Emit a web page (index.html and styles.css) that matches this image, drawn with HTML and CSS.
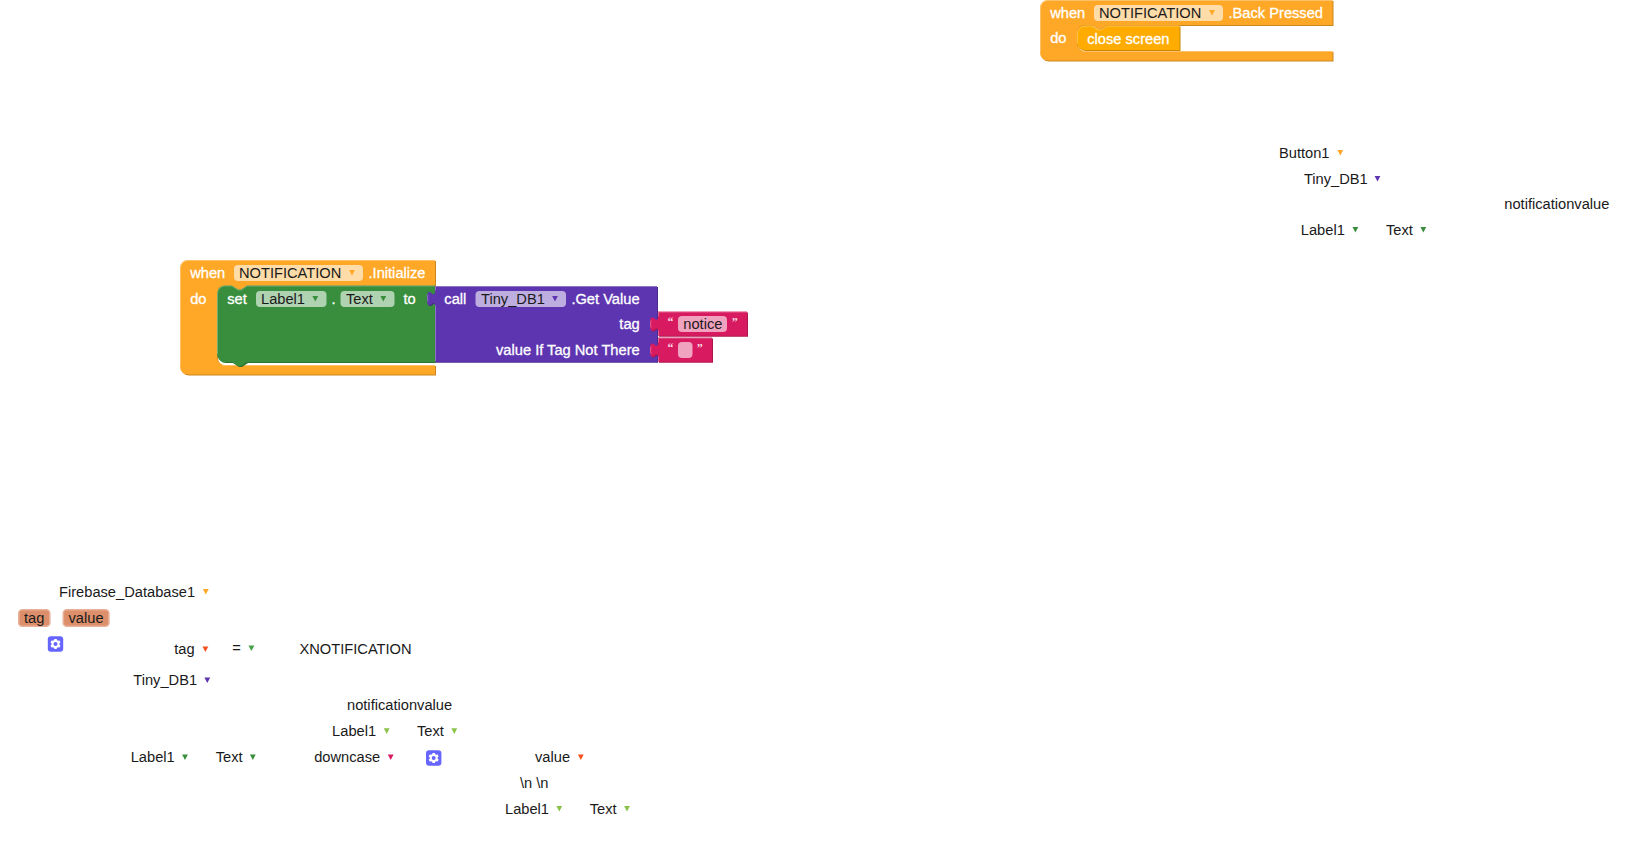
FILE: index.html
```
<!DOCTYPE html>
<html lang="en">

<head>
    <meta charset="UTF-8">
    <meta name="viewport" content="width=device-width, initial-scale=1.0">
    <title>Blocks</title>
    <link rel="stylesheet" href="styles.css">
</head>

<body>
    <svg class="workspace" width="1634" height="848">
        <defs>
            <path id="arrow" d="M -2.9,0 h 5.8 l -2.9,5.6 z" />
            <g id="gear">
                <rect class="gear-bg" width="15.4" height="15.4" rx="3" />
                <path class="gear-teeth" d="M 7.7,2.6 V 12.8 M 3.3,5.15 L 12.1,10.25 M 3.3,10.25 L 12.1,5.15" />
                <circle class="gear-ring" cx="7.7" cy="7.7" r="3" />
            </g>
            <path id="init" d="M 180.5,268.5 a 8,8 0 0 1 8,-8 H 435.5 V 286 H 247.5 l -6,4 h -3 l -6,-4 h -7 a 8,8 0 0 0 -8,8 V 357.5 a 8,8 0 0 0 8,8 H 435.5 V 375 H 188.5 a 8,8 0 0 1 -8,-8 z" />
            <path id="set" d="M 217.5,294 a 8,8 0 0 1 8,-8 h 7 l 6,4 h 3 l 6,-4 H 435.5 V 362.5 H 247.5 l -6,4 h -3 l -6,-4 h -7 a 8,8 0 0 1 -8,-8 z" />
            <path id="call" d="M 435.5,286.5 H 657.5 V 362.3 H 435.5 V 306.5 c 0,-10 -8,8 -8,-7.5 s 8,2.5 8,-7.5 z" />
            <path id="notice" d="M 658.5,312 H 747.5 V 336.3 H 658.5 V 332 c 0,-10 -8,8 -8,-7.5 s 8,2.5 8,-7.5 z" />
            <path id="empty" d="M 658.5,338 H 712.5 V 362.3 H 658.5 V 358 c 0,-10 -8,8 -8,-7.5 s 8,2.5 8,-7.5 z" />
            <path id="back" d="M 1040.5,8.5 a 8,8 0 0 1 8,-8 H 1333 V 25.5 H 1107.5 l -6,4 h -3 l -6,-4 h -7 a 8,8 0 0 0 -8,8 V 43.5 a 8,8 0 0 0 8,8 H 1333 V 61 H 1048.5 a 8,8 0 0 1 -8,-8 z" />
            <path id="close" d="M 1077.5,34 a 8,8 0 0 1 8,-8 h 7 l 6,4 h 3 l 6,-4 H 1180 V 50.5 H 1085.5 a 8,8 0 0 1 -8,-8 z" />
        </defs>

        <!-- when NOTIFICATION.Back Pressed -->
        <g class="block event">
            <use class="shade" href="#back" x="1" y="1" />
            <use class="shape" href="#back" />
            <path class="light" d="M 1041,53 V 8.5 a 7.5,7.5 0 0 1 7.5,-7.5 H 1333 M 1083,52 H 1333" />
            <text x="1050.2" y="17.7">when</text>
            <rect class="field" x="1094" y="5" width="129" height="16" rx="4" />
            <text class="value" x="1099" y="17.7">NOTIFICATION</text>
            <use class="arrow" href="#arrow" x="1212" y="10" />
            <text x="1228.5" y="17.7">.Back Pressed</text>
            <text x="1050.2" y="43">do</text>
        </g>
        <g class="block control">
            <use class="shade" href="#close" x="1" y="1" />
            <use class="shape" href="#close" />
            <path class="light" d="M 1078,44 V 34 a 7.5,7.5 0 0 1 7.5,-7.5 h 7 l 6,4 h 3 l 6,-4 H 1180" />
            <text x="1087.2" y="43.7">close screen</text>
        </g>

        <!-- when NOTIFICATION.Initialize -->
        <g class="block event">
            <use class="shade" href="#init" x="1" y="1" />
            <use class="shape" href="#init" />
            <path class="light" d="M 181,367 V 268.5 a 7.5,7.5 0 0 1 7.5,-7.5 H 435.5 M 223,366 H 435.5" />
            <text x="190.2" y="278">when</text>
            <rect class="field" x="234" y="265" width="129" height="16" rx="4" />
            <text class="value" x="239" y="278">NOTIFICATION</text>
            <use class="arrow" href="#arrow" x="352" y="270" />
            <text x="368.5" y="278">.Initialize</text>
            <text x="190.2" y="303.5">do</text>
        </g>
        <g class="block setter">
            <use class="shade" href="#set" x="1" y="1" />
            <use class="shape" href="#set" />
            <path class="light" d="M 218,354.5 V 294 a 7.5,7.5 0 0 1 7.5,-7.5 h 7 l 6,4 h 3 l 6,-4 H 435" />
            <text x="227.2" y="303.7">set</text>
            <rect class="field" x="256" y="291" width="70.5" height="16" rx="4" />
            <text class="value" x="261" y="303.7">Label1</text>
            <use class="arrow" href="#arrow" x="315.3" y="296" />
            <text x="331.5" y="303.7">.</text>
            <rect class="field" x="340.5" y="291" width="54" height="16" rx="4" />
            <text class="value" x="346" y="303.7">Text</text>
            <use class="arrow" href="#arrow" x="383.3" y="296" />
            <text x="403.5" y="303.7">to</text>
        </g>
        <g class="block database">
            <use class="shade" href="#call" x="1" y="1" />
            <use class="shape" href="#call" />
            <path class="light" d="M 436,362 V 306 M 428.5,302 q -1,-5 0,-7 M 436,291 V 287 H 657.5" />
            <text x="444.3" y="303.7">call</text>
            <rect class="field" x="475.5" y="291" width="90.5" height="16" rx="4" />
            <text class="value" x="481" y="303.7">Tiny_DB1</text>
            <use class="arrow" href="#arrow" x="555" y="296" />
            <text x="571.4" y="303.7">.Get Value</text>
            <text class="end" x="639.7" y="329">tag</text>
            <text class="end" x="639.7" y="354.7">value If Tag Not There</text>
        </g>
        <g class="block string">
            <use class="shade" href="#notice" x="1" y="1" />
            <use class="shape" href="#notice" />
            <path class="light" d="M 659,336 V 331 M 651.5,328 q -1,-5 0,-7 M 659,317 V 312.5 H 747.5" />
            <text class="quote" x="667.5" y="326">“</text>
            <rect class="field" x="678" y="316" width="49" height="16" rx="4" />
            <text class="value" x="683.3" y="329">notice</text>
            <text class="quote" x="731.7" y="326">”</text>
        </g>
        <g class="block string">
            <use class="shade" href="#empty" x="1" y="1" />
            <use class="shape" href="#empty" />
            <path class="light" d="M 659,362 V 357 M 651.5,354 q -1,-5 0,-7 M 659,343 V 338.5 H 712.5" />
            <text class="quote" x="667.5" y="352">“</text>
            <rect class="field" x="678" y="342" width="14.5" height="16" rx="4" />
            <text class="quote" x="696.7" y="352">”</text>
        </g>

        <!-- Button1 click -->
        <g class="loose">
            <text x="1279" y="158">Button1</text>
            <use class="orange" href="#arrow" x="1340.3" y="150" />
            <text x="1303.9" y="184">Tiny_DB1</text>
            <use class="purple" href="#arrow" x="1377.5" y="176" />
            <text x="1504.3" y="209">notificationvalue</text>
            <text x="1300.8" y="235">Label1</text>
            <use class="green" href="#arrow" x="1355.4" y="227" />
            <text x="1386" y="235">Text</text>
            <use class="green" href="#arrow" x="1423.3" y="227" />
        </g>

        <!-- Firebase_Database1 data changed -->
        <g class="loose">
            <text x="59" y="597">Firebase_Database1</text>
            <use class="orange" href="#arrow" x="205.8" y="589" />
            <rect class="param" x="18.8" y="609.8" width="31" height="16.4" rx="3.5" />
            <text x="24" y="622.5">tag</text>
            <rect class="param" x="63.3" y="609.8" width="45.6" height="16.4" rx="3.5" />
            <text x="68.5" y="622.5">value</text>
            <use href="#gear" x="47.8" y="636.3" />
            <text x="174.3" y="654">tag</text>
            <use class="red" href="#arrow" x="205.4" y="646.5" />
            <text x="232.2" y="653">=</text>
            <use class="mid-green" href="#arrow" x="251.4" y="645.5" />
            <text x="299.5" y="654">XNOTIFICATION</text>
            <text x="133.3" y="685">Tiny_DB1</text>
            <use class="purple" href="#arrow" x="207.3" y="677.5" />
            <text x="347" y="710">notificationvalue</text>
            <text x="332.1" y="736">Label1</text>
            <use class="lime" href="#arrow" x="386.7" y="728.3" />
            <text x="417" y="736">Text</text>
            <use class="lime" href="#arrow" x="454.3" y="728.3" />
            <text x="130.7" y="762">Label1</text>
            <use class="green" href="#arrow" x="185" y="754.5" />
            <text x="215.7" y="762">Text</text>
            <use class="green" href="#arrow" x="252.8" y="754.5" />
            <text x="314.2" y="762">downcase</text>
            <use class="pink" href="#arrow" x="390.7" y="754.5" />
            <use href="#gear" x="426" y="750.3" />
            <text x="535" y="762">value</text>
            <use class="red" href="#arrow" x="580.8" y="754.5" />
            <text x="520" y="788">\n \n</text>
            <text x="505" y="814">Label1</text>
            <use class="lime" href="#arrow" x="559.3" y="806" />
            <text x="589.7" y="814">Text</text>
            <use class="lime" href="#arrow" x="627" y="806" />
        </g>
    </svg>
</body>

</html>
```
FILE: styles.css
```
body {
    margin: 0;
    background-color: white;
    overflow: hidden;
}

.workspace {
    display: block;
    font-family: "Liberation Sans", Arial, sans-serif;
    font-size: 14.67px;
    fill: #1a1a1a;
}

.block text {
    fill: white;
    stroke: white;
    stroke-width: 0.3px;
}

.block .value {
    fill: #1a1a1a;
    stroke: none;
}

.block .quote {
    font-family: "Liberation Serif", "Times New Roman", serif;
    font-size: 12px;
    font-weight: bold;
    fill-opacity: 0.85;
    stroke: none;
}

.end {
    text-anchor: end;
}

.field {
    fill: white;
    fill-opacity: 0.6;
}

.shape,
.shade,
.light {
    transform: translate(-0.5px, -0.5px);
}

.light {
    fill: none;
    stroke: white;
    stroke-opacity: 0.3;
    stroke-width: 1px;
}

.event .shape,
.event .arrow,
.orange {
    fill: #ffa726;
}

.event .shade {
    fill: #cc861e;
}

.control .shape {
    fill: #ffab00;
}

.control .shade {
    fill: #cc8900;
}

.setter .shape,
.setter .arrow,
.green {
    fill: #388e3c;
}

.setter .shade {
    fill: #2d7230;
}

.database .shape,
.database .arrow,
.purple {
    fill: #5e35b1;
}

.database .shade {
    fill: #4b2a8e;
}

.string .shape,
.pink {
    fill: #d81b60;
}

.string .shade {
    fill: #ad164d;
}

.mid-green {
    fill: #43a047;
}

.lime {
    fill: #8bc34a;
}

.red {
    fill: #f4511e;
}

.param {
    fill: #dd8f6b;
    stroke: #e7b097;
    stroke-width: 1.6px;
}

.gear-bg {
    fill: #6666ff;
}

.gear-teeth {
    stroke: white;
    stroke-width: 2.6px;
}

.gear-ring {
    fill: #6666ff;
    stroke: white;
    stroke-width: 2px;
}
```
